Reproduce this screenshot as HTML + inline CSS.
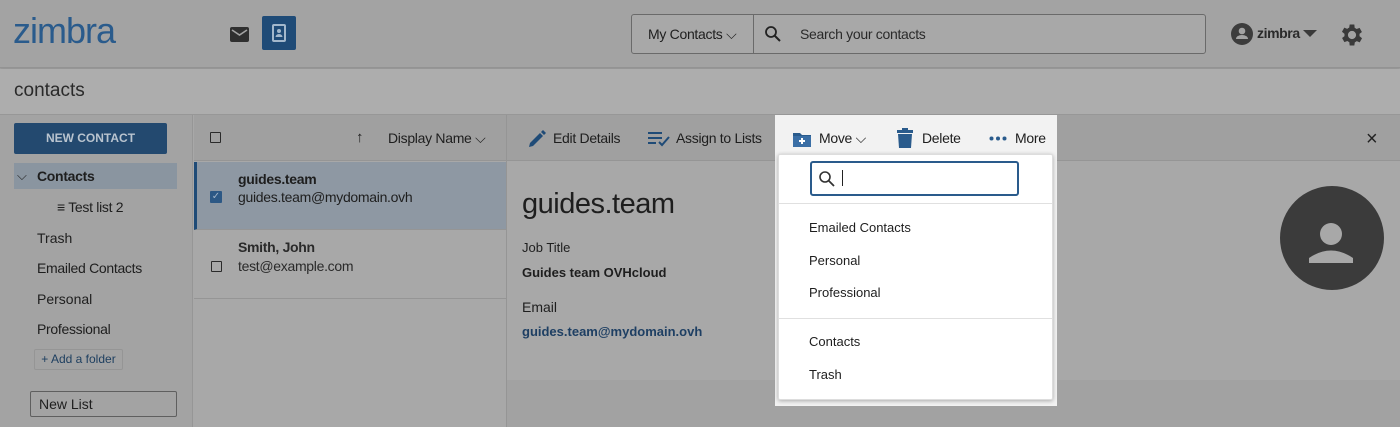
<!DOCTYPE html>
<html><head><style>
*{box-sizing:border-box;margin:0;padding:0}
body{width:1400px;height:427px;overflow:hidden;background:#a8a8a8;font-family:"Liberation Sans",sans-serif;color:#1e1e1e;position:relative;font-size:14px}
.a{position:absolute}
</style></head><body>
<div class="a" style="left:0;top:0;width:1400px;height:68px;background:#a3a3a3;border-bottom:1px solid #939393;box-shadow:0 1px 2px rgba(0,0,0,.15)"></div>
<div class="a" style="left:13px;top:10px;font-size:36px;color:#2a5b8c;letter-spacing:-1px">zimbra</div>
<div class="a" style="left:230px;top:27px;width:19px;height:15px;background:#2f2f2f;border-radius:2px"><svg width="19" height="15"><path d="M2 3 L9.5 8 L17 3" stroke="#a3a3a3" stroke-width="1.6" fill="none"/></svg></div>
<div class="a" style="left:262px;top:16px;width:34px;height:34px;background:#1f4b77;border-radius:2px"><svg width="34" height="34"><rect x="11" y="9" width="12" height="16" rx="1" fill="none" stroke="#a3b8cc" stroke-width="2"/><circle cx="17" cy="15" r="2" fill="#a3b8cc"/><path d="M13.5 21 a3.5 3 0 0 1 7 0z" fill="#a3b8cc"/></svg></div>
<div class="a" style="left:631px;top:14px;width:575px;height:40px;border:1px solid #6a6a6a;border-radius:3px;background:#a8a8a8"></div>
<div class="a" style="left:753px;top:15px;width:1px;height:38px;background:#6a6a6a"></div>
<div class="a" style="left:648px;top:26px;font-size:14px;letter-spacing:-0.3px">My Contacts ⌵</div>
<svg class="a" style="left:764px;top:25px" width="18" height="18"><circle cx="7" cy="7" r="5" stroke="#222" stroke-width="1.8" fill="none"/><path d="M11 11 L16 16" stroke="#222" stroke-width="2"/></svg>
<div class="a" style="left:800px;top:26px;font-size:14px;color:#2a2a2a;letter-spacing:-0.3px">Search your contacts</div>
<svg class="a" style="left:1230px;top:22px" width="24" height="24"><circle cx="12" cy="12" r="11" fill="#3c3c3c"/><circle cx="12" cy="9" r="3.3" fill="#a3a3a3"/><path d="M6 17 a6 4 0 0 1 12 0z" fill="#a3a3a3"/></svg>
<div class="a" style="left:1257px;top:25px;font-size:14px;font-weight:bold;color:#2a2a2a;letter-spacing:-0.4px">zimbra</div>
<svg class="a" style="left:1303px;top:30px" width="14" height="8"><path d="M0 0 H14 L7 7z" fill="#3a3a3a"/></svg>
<svg class="a" style="left:1338px;top:21px" width="28" height="28" viewBox="0 0 24 24"><path fill="#3a3a3a" d="M19.4 13a7.5 7.5 0 0 0 0-2l2.1-1.6-2-3.5-2.5 1a7.3 7.3 0 0 0-1.7-1L15 3h-4l-.4 2.7a7.3 7.3 0 0 0-1.7 1l-2.5-1-2 3.5L6.6 11a7.5 7.5 0 0 0 0 2l-2.1 1.6 2 3.5 2.5-1a7.3 7.3 0 0 0 1.7 1L11 21h4l.4-2.7a7.3 7.3 0 0 0 1.7-1l2.5 1 2-3.5zM13 15.5a3.5 3.5 0 1 1 0-7 3.5 3.5 0 0 1 0 7z" transform="translate(-1 0)"/></svg>
<div class="a" style="left:0;top:69px;width:1400px;height:46px;background:#adadad;border-bottom:1px solid #979797"></div>
<div class="a" style="left:14px;top:80px;font-size:19px;color:#2a2a2a">contacts</div>
<div class="a" style="left:0;top:115px;width:193px;height:312px;background:#a3a3a3;border-right:1px solid #969696"></div>
<div class="a" style="left:14px;top:123px;width:153px;height:31px;background:#23496f;border-radius:2px;color:#b9c4cf;font-size:12px;font-weight:bold;text-align:center;line-height:31px">NEW CONTACT</div>
<div class="a" style="left:14px;top:163px;width:163px;height:26px;background:#8a95a0"></div>
<div class="a" style="left:17px;top:168px;font-size:13px;color:#222">⌵</div>
<div class="a" style="left:37px;top:168px;font-size:14px;font-weight:bold;letter-spacing:-0.3px">Contacts</div>
<div class="a" style="left:57px;top:199px;font-size:14px;letter-spacing:-0.3px">≡ Test list 2</div>
<div class="a" style="left:37px;top:230px;font-size:14px">Trash</div>
<div class="a" style="left:37px;top:260px;font-size:14px;letter-spacing:-0.3px">Emailed Contacts</div>
<div class="a" style="left:37px;top:291px;font-size:14px">Personal</div>
<div class="a" style="left:37px;top:321px;font-size:14px;letter-spacing:-0.3px">Professional</div>
<div class="a" style="left:34px;top:349px;width:89px;height:21px;border:1px solid #959595;border-radius:2px;font-size:12px;color:#1e3f60;line-height:19px;text-align:center">+ Add a folder</div>
<div class="a" style="left:30px;top:391px;width:147px;height:26px;border:1px solid #5f5f5f;border-radius:2px;font-size:14px;line-height:24px;padding-left:8px">New List</div>
<div class="a" style="left:194px;top:115px;width:313px;height:46px;background:#a0a0a0;border-bottom:1px solid #959595"></div>
<div class="a" style="left:210px;top:132px;width:11px;height:11px;border:1.5px solid #2a2a2a;border-radius:1px"></div>
<div class="a" style="left:356px;top:129px;font-size:15px">↑</div>
<div class="a" style="left:388px;top:130px;font-size:14px;letter-spacing:-0.3px">Display Name ⌵</div>
<div class="a" style="left:194px;top:162px;width:313px;height:68px;background:#8e98a3;border-left:3px solid #1f4b77;border-bottom:1px solid #959595"></div>
<div class="a" style="left:238px;top:171px;font-size:14px;font-weight:bold;letter-spacing:-0.3px">guides.team</div>
<div class="a" style="left:210px;top:191px;width:12px;height:12px;background:#2c5885;border-radius:1px;color:#a0b4c8;font-size:10px;line-height:12px;text-align:center">✓</div>
<div class="a" style="left:238px;top:189px;font-size:14px;letter-spacing:-0.3px">guides.team@mydomain.ovh</div>
<div class="a" style="left:194px;top:230px;width:313px;height:69px;border-bottom:1px solid #959595"></div>
<div class="a" style="left:238px;top:239px;font-size:14px;font-weight:bold;color:#2a2a2a;letter-spacing:-0.3px">Smith, John</div>
<div class="a" style="left:211px;top:261px;width:11px;height:11px;border:1.5px solid #2a2a2a;border-radius:1px"></div>
<div class="a" style="left:238px;top:258px;font-size:14px;color:#2a2a2a;letter-spacing:-0.3px">test@example.com</div>
<div class="a" style="left:506px;top:115px;width:1px;height:312px;background:#959595"></div>
<div class="a" style="left:507px;top:115px;width:893px;height:46px;background:#a0a0a0;border-bottom:1px solid #959595"></div>
<div class="a" style="left:507px;top:380px;width:893px;height:47px;background:#a2a2a2"></div>
<svg class="a" style="left:527px;top:129px" width="20" height="20"><path d="M2 18 L3 14 L13 4 L16 7 L6 17z" fill="#1f4b77"/><path d="M14 3 L16 1 L19 4 L17 6z" fill="#1f4b77"/></svg>
<div class="a" style="left:553px;top:130px;font-size:14px;letter-spacing:-0.3px">Edit Details</div>
<svg class="a" style="left:647px;top:131px" width="24" height="16"><path d="M1 2H15M1 7H15M1 12H9" stroke="#1f4b77" stroke-width="2"/><path d="M12 11 L15 14 L22 6" stroke="#1f4b77" stroke-width="2" fill="none"/></svg>
<div class="a" style="left:676px;top:130px;font-size:14px;letter-spacing:-0.3px">Assign to Lists</div>
<div class="a" style="left:1366px;top:128px;font-size:20px;color:#222">×</div>
<div class="a" style="left:522px;top:188px;font-size:29px;color:#1e1e1e;letter-spacing:-0.5px">guides.team</div>
<div class="a" style="left:522px;top:240px;font-size:13px">Job Title</div>
<div class="a" style="left:522px;top:265px;font-size:13px;font-weight:bold">Guides team OVHcloud</div>
<div class="a" style="left:522px;top:299px;font-size:14px">Email</div>
<div class="a" style="left:522px;top:324px;font-size:13px;font-weight:bold;color:#1e3f63">guides.team@mydomain.ovh</div>
<svg class="a" style="left:1279px;top:185px" width="106" height="106"><circle cx="53" cy="53" r="52" fill="#3b3b3b"/><circle cx="52" cy="49" r="11" fill="#a8a8a8"/><path d="M30 78 v-5 q22-15 44 0 v5z" fill="#a8a8a8"/></svg>
<div class="a" style="left:775px;top:115px;width:282px;height:291px;background:#f2f2f2"></div>
<svg class="a" style="left:792px;top:129px" width="20" height="20"><path d="M1 4 H8 L10 6 H19 V18 H1z" fill="#2a5b8c"/><rect x="1" y="7" width="18" height="11" fill="#3a6ea5"/><path d="M10 9 v6 M7 12 h6" stroke="#fff" stroke-width="2"/></svg>
<div class="a" style="left:819px;top:130px;font-size:14px;letter-spacing:-0.3px">Move ⌵</div>
<svg class="a" style="left:896px;top:128px" width="18" height="21"><rect x="1" y="2" width="16" height="3" fill="#2a5b8c"/><rect x="6" y="0" width="6" height="3" fill="#2a5b8c"/><path d="M2 6 H16 L15 20 H3z" fill="#2a5b8c"/></svg>
<div class="a" style="left:922px;top:130px;font-size:14px;letter-spacing:-0.3px">Delete</div>
<svg class="a" style="left:989px;top:136px" width="18" height="5"><circle cx="2.5" cy="2.5" r="2" fill="#2a5b8c"/><circle cx="9" cy="2.5" r="2" fill="#2a5b8c"/><circle cx="15.5" cy="2.5" r="2" fill="#2a5b8c"/></svg>
<div class="a" style="left:1015px;top:130px;font-size:14px;letter-spacing:-0.3px">More</div>
<div class="a" style="left:778px;top:154px;width:275px;height:246px;background:#fff;border:1px solid #ddd;border-radius:2px;box-shadow:0 1px 4px rgba(0,0,0,.3)"></div>
<div class="a" style="left:810px;top:161px;width:209px;height:35px;border:2px solid #2a5b8c;border-radius:3px;background:#fff"></div>
<svg class="a" style="left:818px;top:170px" width="18" height="18"><circle cx="7" cy="7" r="5" stroke="#333" stroke-width="1.6" fill="none"/><path d="M11 11 L16 16" stroke="#333" stroke-width="1.8"/></svg>
<div class="a" style="left:842px;top:170px;width:1px;height:16px;background:#222"></div>
<div class="a" style="left:779px;top:203px;width:273px;height:1px;background:#e0e0e0"></div>
<div class="a" style="left:809px;top:220px;font-size:13px">Emailed Contacts</div>
<div class="a" style="left:809px;top:253px;font-size:13px">Personal</div>
<div class="a" style="left:809px;top:285px;font-size:13px">Professional</div>
<div class="a" style="left:779px;top:318px;width:273px;height:1px;background:#e0e0e0"></div>
<div class="a" style="left:809px;top:334px;font-size:13px">Contacts</div>
<div class="a" style="left:809px;top:367px;font-size:13px">Trash</div>
</body></html>
